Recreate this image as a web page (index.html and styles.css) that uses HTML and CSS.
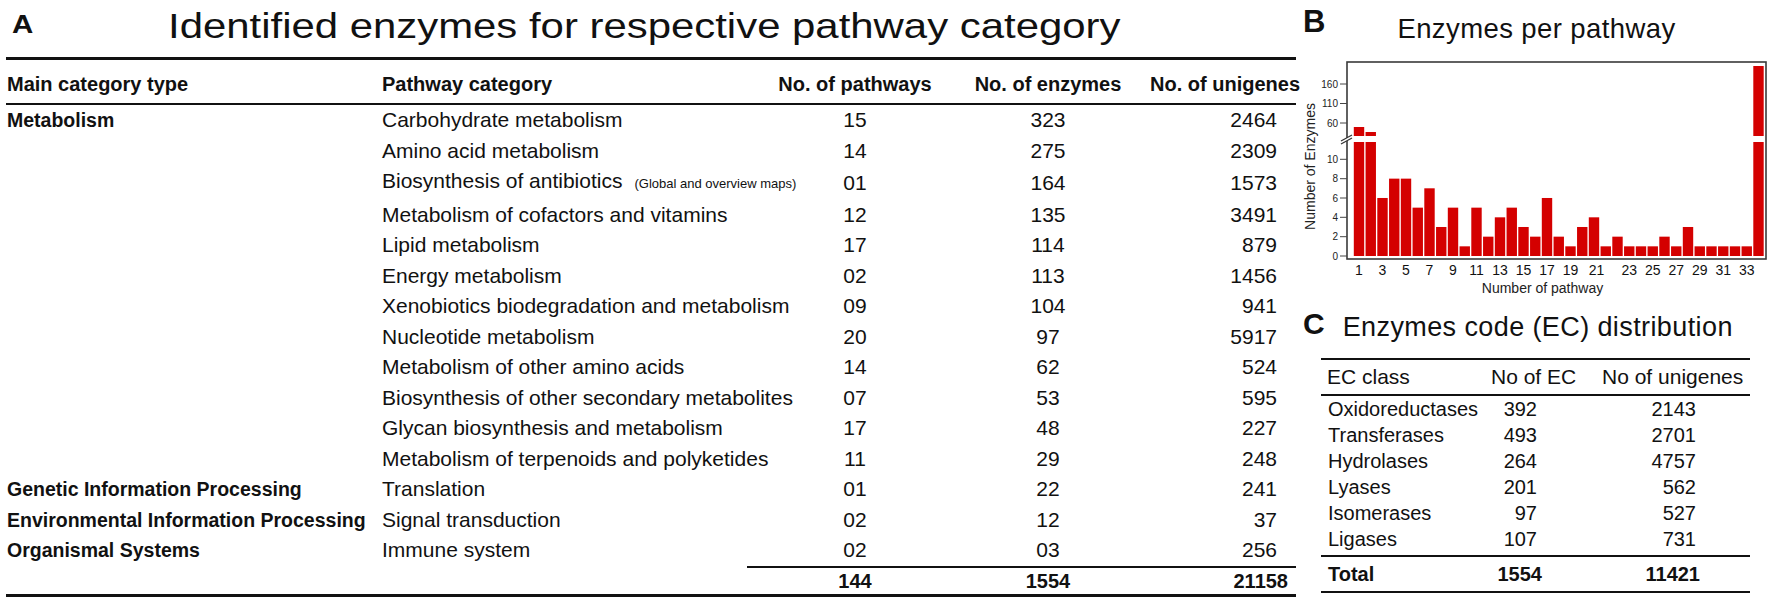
FILE: index.html
```html
<!DOCTYPE html>
<html lang="en">
<head>
<meta charset="utf-8">
<title>Identified enzymes</title>
<link rel="stylesheet" href="styles.css">
</head>
<body>
<div class="page">
  <section class="panel-a">
    <header class="a-head">
      <span class="tag tag-a">A</span>
      <h1 class="title-a">Identified enzymes for respective pathway category</h1>
    </header>
    <table class="tbl-a">
      <colgroup>
        <col class="c1"><col class="c2"><col class="c3"><col class="c4"><col class="c5">
      </colgroup>
      <thead>
        <tr>
          <th class="h-main">Main category type</th>
          <th>Pathway category</th>
          <th><div class="ctr">No. of pathways</div></th>
          <th><div class="ctr">No. of enzymes</div></th>
          <th><div class="rgt">No. of unigenes</div></th>
        </tr>
      </thead>
      <tbody>
        <tr><td class="cat">Metabolism</td><td>Carbohydrate metabolism</td><td class="mid">15</td><td class="mid">323</td><td class="end">2464</td></tr>
        <tr><td class="cat"></td><td>Amino acid metabolism</td><td class="mid">14</td><td class="mid">275</td><td class="end">2309</td></tr>
        <tr><td class="cat"></td><td>Biosynthesis of antibiotics<span class="note">(Global and overview maps)</span></td><td class="mid">01</td><td class="mid">164</td><td class="end">1573</td></tr>
        <tr><td class="cat"></td><td>Metabolism of cofactors and vitamins</td><td class="mid">12</td><td class="mid">135</td><td class="end">3491</td></tr>
        <tr><td class="cat"></td><td>Lipid metabolism</td><td class="mid">17</td><td class="mid">114</td><td class="end">879</td></tr>
        <tr><td class="cat"></td><td>Energy metabolism</td><td class="mid">02</td><td class="mid">113</td><td class="end">1456</td></tr>
        <tr><td class="cat"></td><td>Xenobiotics biodegradation and metabolism</td><td class="mid">09</td><td class="mid">104</td><td class="end">941</td></tr>
        <tr><td class="cat"></td><td>Nucleotide metabolism</td><td class="mid">20</td><td class="mid">97</td><td class="end">5917</td></tr>
        <tr><td class="cat"></td><td>Metabolism of other amino acids</td><td class="mid">14</td><td class="mid">62</td><td class="end">524</td></tr>
        <tr><td class="cat"></td><td>Biosynthesis of other secondary metabolites</td><td class="mid">07</td><td class="mid">53</td><td class="end">595</td></tr>
        <tr><td class="cat"></td><td>Glycan biosynthesis and metabolism</td><td class="mid">17</td><td class="mid">48</td><td class="end">227</td></tr>
        <tr><td class="cat"></td><td>Metabolism of terpenoids and polyketides</td><td class="mid">11</td><td class="mid">29</td><td class="end">248</td></tr>
        <tr><td class="cat">Genetic Information Processing</td><td>Translation</td><td class="mid">01</td><td class="mid">22</td><td class="end">241</td></tr>
        <tr><td class="cat">Environmental Information Processing</td><td>Signal transduction</td><td class="mid">02</td><td class="mid">12</td><td class="end">37</td></tr>
        <tr><td class="cat">Organismal Systems</td><td>Immune system</td><td class="mid">02</td><td class="mid">03</td><td class="end">256</td></tr>
      </tbody>
      <tfoot>
        <tr>
          <td class="f-blank"></td>
          <td class="f-lead"></td>
          <td class="f-sum mid">144</td>
          <td class="f-sum mid">1554</td>
          <td class="f-sum f-end">21158</td>
        </tr>
      </tfoot>
    </table>
  </section>

  <aside class="side">
    <section class="panel-b">
      <header class="b-head">
        <span class="tag tag-b">B</span>
        <h2 class="title-b">Enzymes per pathway</h2>
      </header>
      <svg class="chart" width="472" height="250" viewBox="0 0 472 250" xmlns="http://www.w3.org/2000/svg">
        <g class="bars">
          <rect x="53.8" y="92" width="10.4" height="114"/>
          <rect x="53.8" y="77" width="10.4" height="9"/>
          <rect x="65.55" y="92" width="10.4" height="114"/>
          <rect x="65.55" y="82" width="10.4" height="4"/>
          <rect x="77.3" y="147.98" width="10.4" height="58.02"/>
          <rect x="89.05" y="128.64" width="10.4" height="77.36"/>
          <rect x="100.8" y="128.64" width="10.4" height="77.36"/>
          <rect x="112.55" y="157.65" width="10.4" height="48.35"/>
          <rect x="124.3" y="138.31" width="10.4" height="67.69"/>
          <rect x="136.05" y="176.99" width="10.4" height="29.01"/>
          <rect x="147.8" y="157.65" width="10.4" height="48.35"/>
          <rect x="159.55" y="196.33" width="10.4" height="9.67"/>
          <rect x="171.3" y="157.65" width="10.4" height="48.35"/>
          <rect x="183.05" y="186.66" width="10.4" height="19.34"/>
          <rect x="194.8" y="167.32" width="10.4" height="38.68"/>
          <rect x="206.55" y="157.65" width="10.4" height="48.35"/>
          <rect x="218.3" y="176.99" width="10.4" height="29.01"/>
          <rect x="230.05" y="186.66" width="10.4" height="19.34"/>
          <rect x="241.8" y="147.98" width="10.4" height="58.02"/>
          <rect x="253.55" y="186.66" width="10.4" height="19.34"/>
          <rect x="265.3" y="196.33" width="10.4" height="9.67"/>
          <rect x="277.05" y="176.99" width="10.4" height="29.01"/>
          <rect x="288.8" y="167.32" width="10.4" height="38.68"/>
          <rect x="300.55" y="196.33" width="10.4" height="9.67"/>
          <rect x="312.3" y="186.66" width="10.4" height="19.34"/>
          <rect x="324.05" y="196.33" width="10.4" height="9.67"/>
          <rect x="335.8" y="196.33" width="10.4" height="9.67"/>
          <rect x="347.55" y="196.33" width="10.4" height="9.67"/>
          <rect x="359.3" y="186.66" width="10.4" height="19.34"/>
          <rect x="371.05" y="196.33" width="10.4" height="9.67"/>
          <rect x="382.8" y="176.99" width="10.4" height="29.01"/>
          <rect x="394.55" y="196.33" width="10.4" height="9.67"/>
          <rect x="406.3" y="196.33" width="10.4" height="9.67"/>
          <rect x="418.05" y="196.33" width="10.4" height="9.67"/>
          <rect x="429.8" y="196.33" width="10.4" height="9.67"/>
          <rect x="441.55" y="196.33" width="10.4" height="9.67"/>
          <rect x="453.3" y="92" width="10.4" height="114"/>
          <rect x="453.3" y="16" width="10.4" height="70"/>
        </g>
        <rect class="frame" x="47" y="12" width="419" height="197"/>
        <g class="ticks">
          <line x1="40" y1="34" x2="47" y2="34"/>
          <line x1="40" y1="53.5" x2="47" y2="53.5"/>
          <line x1="40" y1="73" x2="47" y2="73"/>
          <line x1="40" y1="109.3" x2="47" y2="109.3"/>
          <line x1="40" y1="128.7" x2="47" y2="128.7"/>
          <line x1="40" y1="148" x2="47" y2="148"/>
          <line x1="40" y1="167.3" x2="47" y2="167.3"/>
          <line x1="40" y1="186.7" x2="47" y2="186.7"/>
          <line x1="40" y1="206" x2="47" y2="206"/>
        </g>
        <polygon class="break-gap" points="41,91 52,85 52,88 41,94"/>
        <g class="break">
          <line x1="41" y1="91" x2="52" y2="85"/>
          <line x1="41" y1="94" x2="52" y2="88"/>
        </g>
        <g class="ylab">
          <text x="38" y="37.5">160</text>
          <text x="38" y="57">110</text>
          <text x="38" y="76.5">60</text>
          <text x="38" y="112.8">10</text>
          <text x="38" y="132.2">8</text>
          <text x="38" y="151.5">6</text>
          <text x="38" y="170.8">4</text>
          <text x="38" y="190.2">2</text>
          <text x="38" y="209.5">0</text>
        </g>
        <g class="xlab">
          <text x="59" y="225">1</text>
          <text x="82.5" y="225">3</text>
          <text x="106" y="225">5</text>
          <text x="129.5" y="225">7</text>
          <text x="153" y="225">9</text>
          <text x="176.5" y="225">11</text>
          <text x="200" y="225">13</text>
          <text x="223.5" y="225">15</text>
          <text x="247" y="225">17</text>
          <text x="270.5" y="225">19</text>
          <text x="296.5" y="225">21</text>
          <text x="329.25" y="225">23</text>
          <text x="352.75" y="225">25</text>
          <text x="376.25" y="225">27</text>
          <text x="399.75" y="225">29</text>
          <text x="423.25" y="225">31</text>
          <text x="446.75" y="225">33</text>
        </g>
        <text class="axis-title" x="242.5" y="243">Number of pathway</text>
        <text class="axis-title" transform="translate(15 116.5) rotate(-90)" x="0" y="0">Number of Enzymes</text>
      </svg>
    </section>

    <section class="panel-c">
      <header class="c-head">
        <span class="tag tag-c">C</span>
        <h2 class="title-c">Enzymes code (EC) distribution</h2>
      </header>
      <table class="tbl-c">
        <colgroup><col class="k1"><col class="k2"><col class="k3"></colgroup>
        <thead>
          <tr><th class="kh1">EC class</th><th class="kh2">No of EC</th><th class="kh3">No of unigenes</th></tr>
        </thead>
        <tbody>
          <tr><td class="kname">Oxidoreductases</td><td class="kec">392</td><td class="kug">2143</td></tr>
          <tr><td class="kname">Transferases</td><td class="kec">493</td><td class="kug">2701</td></tr>
          <tr><td class="kname">Hydrolases</td><td class="kec">264</td><td class="kug">4757</td></tr>
          <tr><td class="kname">Lyases</td><td class="kec">201</td><td class="kug">562</td></tr>
          <tr><td class="kname">Isomerases</td><td class="kec">97</td><td class="kug">527</td></tr>
          <tr class="last"><td class="kname">Ligases</td><td class="kec">107</td><td class="kug">731</td></tr>
        </tbody>
        <tfoot>
          <tr><td class="kname">Total</td><td class="kec ktot-ec">1554</td><td class="kug ktot-ug">11421</td></tr>
        </tfoot>
      </table>
    </section>
  </aside>
</div>
</body>
</html>
```

FILE: styles.css
```css
* { box-sizing: border-box; }

html, body {
  margin: 0;
  padding: 0;
  background: #fff;
}

body {
  width: 1772px;
  height: 599px;
  overflow: hidden;
  font-family: "Liberation Sans", Arial, Helvetica, sans-serif;
  color: #111;
}

.page {
  display: flex;
  width: 1772px;
  height: 599px;
}

/* ---------- Panel A ---------- */
.panel-a {
  width: 1300px;
  flex: none;
}

.a-head {
  display: flex;
  align-items: flex-start;
  height: 57px;
}

.tag {
  font-weight: bold;
  line-height: 1;
  color: #111;
}

.tag-a {
  font-size: 25px;
  margin: 11.5px 0 0 12px;
  transform: scaleX(1.18);
  transform-origin: left top;
}

.title-a {
  margin: 8.4px 0 0 138px;
  font-size: 35px;
  font-weight: normal;
  line-height: 1;
  white-space: nowrap;
  transform: scaleX(1.197);
  transform-origin: left top;
}

.tbl-a {
  margin-left: 6px;
  width: 1290px;
  table-layout: fixed;
  border-collapse: separate;
  border-spacing: 0;
}

.c1 { width: 376px; }
.c2 { width: 413px; }
.c3 { width: 120px; }
.c4 { width: 266px; }
.c5 { width: 115px; }

.tbl-a th {
  font-size: 20px;
  font-weight: bold;
  text-align: left;
  white-space: nowrap;
  line-height: 24px;
  padding: 12px 0 7px 0;
  border-top: 3px solid #111;
  border-bottom: 2px solid #111;
}

.tbl-a .h-main { padding-left: 1px; }

.ctr {
  display: flex;
  justify-content: center;
}

.rgt {
  display: flex;
  justify-content: flex-end;
  margin-right: -4px;
}

.tbl-a td {
  font-size: 21px;
  line-height: 30.5px;
  padding: 0;
  white-space: nowrap;
}

.tbl-a td.cat {
  font-size: 19.5px;
  font-weight: bold;
  padding-left: 1px;
}

.tbl-a td.mid { text-align: center; }
.tbl-a td.end { text-align: right; padding-right: 19px; }

.note {
  font-size: 13px;
  margin-left: 12px;
}

.tbl-a tfoot td {
  font-size: 20px;
  font-weight: bold;
  line-height: 26px;
  border-bottom: 3px solid #111;
}

.tbl-a tfoot td.f-sum { border-top: 2px solid #111; }
.tbl-a tfoot td.f-blank,
.tbl-a tfoot td.f-lead { padding-top: 2px; }

.tbl-a tfoot td.f-lead {
  background: linear-gradient(#111, #111) no-repeat right top / 48px 2px;
}

.tbl-a tfoot td.f-end { text-align: right; padding-right: 8px; }

/* ---------- Right column ---------- */
.side {
  width: 472px;
  flex: none;
  display: flex;
  flex-direction: column;
}

/* ---------- Panel B ---------- */
.panel-b { height: 300px; }

.b-head {
  display: flex;
  align-items: flex-start;
  height: 50px;
}

.tag-b {
  font-size: 31px;
  margin: 6px 0 0 3px;
}

.title-b {
  margin: 15px 0 0 72px;
  font-size: 27.5px;
  font-weight: normal;
  line-height: 1;
  letter-spacing: 0.4px;
  white-space: nowrap;
}

.chart { display: block; }

.bars rect { fill: #d40000; }

.frame {
  fill: none;
  stroke: #3a3a3a;
  stroke-width: 1.6;
}

.ticks line {
  stroke: #444;
  stroke-width: 1;
}

.break-gap { fill: #fff; }

.break line {
  stroke: #333;
  stroke-width: 1.2;
}

.ylab text {
  font-family: "Liberation Sans", Arial, sans-serif;
  font-size: 10px;
  fill: #222;
  text-anchor: end;
}

.xlab text {
  font-family: "Liberation Sans", Arial, sans-serif;
  font-size: 14px;
  fill: #111;
  text-anchor: middle;
}

.axis-title {
  font-family: "Liberation Sans", Arial, sans-serif;
  font-size: 14px;
  fill: #222;
  text-anchor: middle;
}

/* ---------- Panel C ---------- */
.panel-c { height: 299px; }

.c-head {
  display: flex;
  align-items: flex-start;
  height: 58px;
}

.tag-c {
  font-size: 30px;
  margin: 9px 0 0 3px;
}

.title-c {
  margin: 13.5px 0 0 18px;
  font-size: 27px;
  font-weight: normal;
  line-height: 1;
  letter-spacing: 0.4px;
  white-space: nowrap;
}

.tbl-c {
  margin-left: 21px;
  width: 429px;
  table-layout: fixed;
  border-collapse: separate;
  border-spacing: 0;
}

.k1 { width: 159px; }
.k2 { width: 105px; }
.k3 { width: 165px; }

.tbl-c th {
  font-size: 21px;
  font-weight: normal;
  text-align: left;
  line-height: 34px;
  padding: 0;
  white-space: nowrap;
  border-top: 2px solid #111;
  border-bottom: 2px solid #111;
}

.tbl-c .kh1 { padding-left: 6px; }
.tbl-c .kh2 { padding-left: 11px; }
.tbl-c .kh3 { padding-left: 17px; }

.tbl-c td {
  font-size: 20px;
  line-height: 26px;
  padding: 0;
  white-space: nowrap;
}

.tbl-c td.kname { padding-left: 7px; }
.tbl-c td.kec { text-align: right; padding-right: 48px; }
.tbl-c td.kug { text-align: right; padding-right: 54px; }

.tbl-c tr.last td { padding-bottom: 3px; }

.tbl-c tfoot td {
  font-weight: bold;
  line-height: 34px;
  border-top: 2px solid #111;
  border-bottom: 2px solid #111;
}

.tbl-c td.ktot-ec { padding-right: 43px; }
.tbl-c td.ktot-ug { padding-right: 50px; }
```
